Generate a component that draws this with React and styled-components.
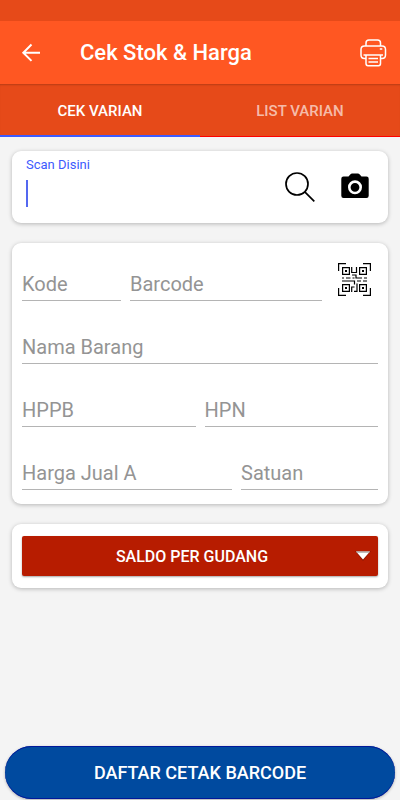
import React, { useState } from 'react'
import styled, { createGlobalStyle } from 'styled-components'

const GlobalStyle = createGlobalStyle`
  * {
    box-sizing: border-box;
  }

  body {
    margin: 0;
    background-color: #f4f4f4;
    font-family: Roboto, "Liberation Sans", sans-serif;
  }

  button, input {
    font-family: inherit;
    border: none;
    outline: none;
    padding: 0;
    background: none;
  }
`

const Page = styled.div`
  min-height: 100vh;
  display: flex;
  flex-direction: column;
`

const StatusBar = styled.div`
  height: 21px;
  background-color: #e64a19;
`

const Toolbar = styled.header`
  height: 63px;
  display: flex;
  align-items: center;
  padding: 0 11px 0 16px;
  background-color: #ff5722;
  color: white;
`

const Title = styled.h1`
  flex: 1;
  margin: 0 0 0 34px;
  font-size: 22px;
  line-height: 28px;
  font-weight: 500;
`

const IconButton = styled.button`
  display: flex;
  align-items: ${props => props.$align || 'center'};
  justify-content: center;
  color: inherit;
  cursor: pointer;
`

const Tabs = styled.div`
  display: flex;
  height: 53px;
  background-color: #e64a19;
  box-shadow: inset 0 2px 2px -1px rgba(0, 0, 0, 0.2);
`

const Tab = styled.button`
  flex: 1;
  font-size: 15px;
  font-weight: 500;
  color: ${props => (props.$active ? 'white' : 'rgba(255, 255, 255, 0.65)')};
  border-top: solid 2px transparent;
  border-bottom: solid ${props => (props.$active ? '2px #3d5afe' : '1px #ff0000')};
  cursor: pointer;
`

const Content = styled.main`
  display: flex;
  flex-direction: column;
  gap: 20px;
  padding: 14px 12px;
`

const Card = styled.section`
  padding: 12px 10px;
  border-radius: 9px;
  background-color: white;
  box-shadow: 0 1px 4px rgba(0, 0, 0, 0.26);
`

const ScanCard = styled(Card)`
  display: flex;
  height: 72px;
  padding: 5px 19px 5px 14px;
  gap: 26px;
  color: black;
`

const ScanField = styled.div`
  flex: 1;
  min-width: 0;
`

const ScanLabel = styled.label`
  display: block;
  font-size: 13px;
  line-height: 18px;
  color: #3d5afe;
`

const ScanRow = styled.div`
  display: flex;
  margin-top: 6px;
`

const Caret = styled.span`
  width: 2px;
  height: 27px;
  background-color: #5468f0;
`

const ScanInput = styled.input`
  flex: 1;
  min-width: 0;
  font-size: 20px;
  caret-color: transparent;
`

const FormCard = styled(Card)`
  padding-top: 25px;
  padding-bottom: 14px;
  display: flex;
  flex-direction: column;
  gap: 30px;
`

const Row = styled.div`
  display: grid;
  grid-template-columns: ${props => props.$columns};
  column-gap: 9px;
`

const Field = styled.input`
  width: 100%;
  height: 33px;
  font-size: 20px;
  color: #212121;
  border-bottom: solid 1px #b4b4b4;

  &::placeholder {
    color: #949494;
    opacity: 1;
  }
`

const SaldoButton = styled.button`
  display: flex;
  align-items: center;
  width: 100%;
  height: 40px;
  padding: 0 7px;
  border-radius: 2px;
  background-color: #b71c00;
  box-shadow: 0 1px 2px rgba(0, 0, 0, 0.35);
  color: white;
  font-size: 16px;
  font-weight: 500;
  cursor: pointer;

  span {
    flex: 1;
  }
`

const Footer = styled.footer`
  margin-top: auto;
  padding: 0 5px 1px;
`

const PrintButton = styled.button`
  width: 100%;
  height: 53px;
  border-radius: 27px;
  background-color: #004a9f;
  box-shadow: inset 0 1px 0 #00189a, inset 0 -1px 0 #00189a, 0 1px 3px rgba(0, 0, 0, 0.3);
  color: white;
  font-size: 18px;
  font-weight: 500;
  cursor: pointer;
`

function BackIcon() {
  return (
    <svg width='30' height='30' viewBox='0 0 30 30' fill='none' stroke='white' strokeWidth='2'>
      <path d='M24 14.700H7.500M15.500 6.500L7.300 14.700L15.500 22.900' />
    </svg>
  )
}

function PrinterIcon() {
  return (
    <svg width='30' height='30' viewBox='0 0 30 30' fill='none' stroke='white' strokeWidth='1.500'>
      <path d='M7 8V5Q7 2 10 2H18.500Q21.500 2 21.500 5V8' />
      <path d='M7 20.500H5.500Q2 20.500 2 17V11.500Q2 8 5.500 8H23Q26.500 8 26.500 11.500V17Q26.500 20.500 23 20.500H21.500' />
      <path d='M4.500 17H24M7 17V25.500Q7 27.700 9 27.700H19.500Q21.500 27.700 21.500 25.500V17' />
      <path d='M9.500 20.500H19M9.500 24H19M20.800 11H23.300' />
    </svg>
  )
}

function SearchIcon() {
  return (
    <svg width='30' height='30' viewBox='0 0 30 30' fill='none' stroke='black' strokeWidth='1.700'>
      <circle cx='12' cy='12' r='11' />
      <path d='M19.800 19.800L29.300 29.300' />
    </svg>
  )
}

function CameraIcon() {
  return (
    <svg width='28' height='28' viewBox='0 0 28 28'>
      <path d='M2.500 3.500H7.500L9.500 1.200Q10.200 .5 11 .5H17Q17.800 .5 18.500 1.200L20.500 3.500H25.500Q27.700 3.500 27.700 5.700V22.800Q27.700 25 25.500 25H2.500Q.3 25 .3 22.800V5.700Q.3 3.500 2.500 3.500Z' fill='black' />
      <circle cx='14' cy='14.300' r='5.700' fill='black' stroke='white' strokeWidth='2.600' />
    </svg>
  )
}

function QrIcon() {
  return (
    <svg width='34' height='34' viewBox='0 0 34 34' fill='none' stroke='black' strokeWidth='1.200'>
      <path d='M.6 8V.6H8M25 .6H32.400V8M32.400 25V32.400H25M8 32.400H.6V25' />
      <path d='M4.600 4.600H11.400V11.400H4.600ZM21.600 4.600H28.400V11.400H21.600ZM4.600 21.600H11.400V28.400H4.600ZM21.600 21.600H28.400V28.400H21.600Z' />
      <path d='M7 7H9V9H7ZM24 7H26V9H24ZM7 24H9V26H7ZM24 24H26V26H24Z' fill='black' stroke='none' />
      <path d='M13.700 4V9.500H18.500V4M14 12H18V15H21' />
      <path d='M4 15H6M8 15H12.500M14.500 15H16.500M21 15H24M26 15H29' />
      <path d='M4 18H16.500V21.500M19 18H23M25 18H29' />
      <path d='M13.700 29V24H16.500M19 20.500V28.400H16' />
    </svg>
  )
}

function ArrowIcon() {
  return (
    <svg width='16' height='12' viewBox='0 0 16 12'>
      <path d='M0 1H16L8 11Z' fill='#701000' opacity='.6' />
      <path d='M1 1.500H15L8 9.500Z' fill='white' />
      <path d='M1 1.500H15L14 2.800H2Z' fill='#aaa' />
    </svg>
  )
}

export default function App() {
  const [tab, setTab] = useState('cek')

  return (
    <Page>
      <GlobalStyle />
      <StatusBar />
      <Toolbar>
        <IconButton aria-label='Kembali'><BackIcon /></IconButton>
        <Title>Cek Stok &amp; Harga</Title>
        <IconButton aria-label='Cetak'><PrinterIcon /></IconButton>
      </Toolbar>
      <Tabs>
        <Tab $active={tab === 'cek'} onClick={() => setTab('cek')}>CEK VARIAN</Tab>
        <Tab $active={tab === 'list'} onClick={() => setTab('list')}>LIST VARIAN</Tab>
      </Tabs>

      <Content>
        <ScanCard>
          <ScanField>
            <ScanLabel htmlFor='scan'>Scan Disini</ScanLabel>
            <ScanRow>
              <Caret />
              <ScanInput id='scan' />
            </ScanRow>
          </ScanField>
          <IconButton aria-label='Cari'><SearchIcon /></IconButton>
          <IconButton aria-label='Kamera'><CameraIcon /></IconButton>
        </ScanCard>

        <FormCard>
          <Row $columns='99fr 192fr 47px'>
            <Field placeholder='Kode' aria-label='Kode' />
            <Field placeholder='Barcode' aria-label='Barcode' />
            <IconButton $align='flex-end' aria-label='Scan QR'>
              <QrLift><QrIcon /></QrLift>
            </IconButton>
          </Row>
          <Row $columns='1fr'>
            <Field placeholder='Nama Barang' aria-label='Nama Barang' />
          </Row>
          <Row $columns='1fr 1fr'>
            <Field placeholder='HPPB' aria-label='HPPB' />
            <Field placeholder='HPN' aria-label='HPN' />
          </Row>
          <Row $columns='210fr 137fr'>
            <Field placeholder='Harga Jual A' aria-label='Harga Jual A' />
            <Field placeholder='Satuan' aria-label='Satuan' />
          </Row>
        </FormCard>

        <Card>
          <SaldoButton>
            <span>SALDO PER GUDANG</span>
            <ArrowIcon />
          </SaldoButton>
        </Card>
      </Content>

      <Footer>
        <PrintButton>DAFTAR CETAK BARCODE</PrintButton>
      </Footer>
    </Page>
  )
}

// keeps the QR code above the underline of its row
const QrLift = styled.span`
  display: flex;
  height: 38px;
  margin-top: -5px;
`
